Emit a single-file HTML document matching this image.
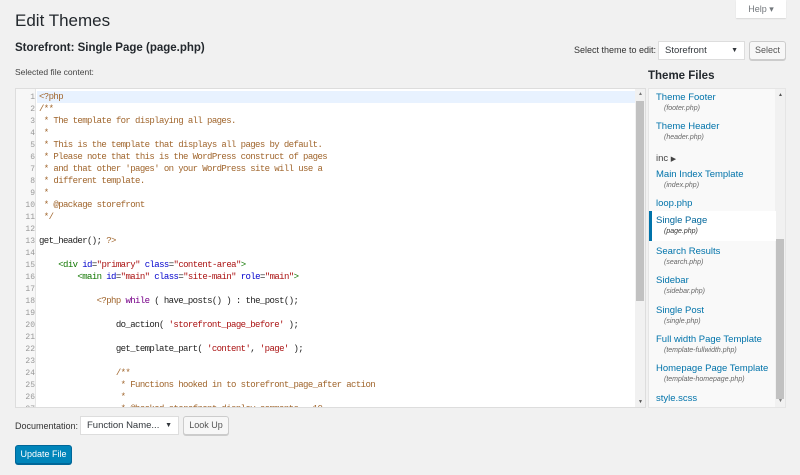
<!DOCTYPE html>
<html><head><style>
*{box-sizing:border-box;margin:0;padding:0}
body{width:800px;height:475px;background:#f1f1f1;font-family:"Liberation Sans",sans-serif;color:#23282d;position:relative;overflow:hidden}
.a{position:absolute;white-space:nowrap}
.code{position:absolute;left:15px;top:88px;width:631px;height:320px;background:#fff;border:1px solid #ddd;overflow:hidden}
.gut{position:absolute;left:0;top:0;width:20px;height:100%;background:#f7f7f7;border-right:1px solid #e5e5e5}
.ln{position:absolute;left:0;width:19px;text-align:right;font:8px "Liberation Mono",monospace;color:#999}
.cl{position:absolute;left:23px;font:9px "Liberation Mono",monospace;letter-spacing:-0.6px;color:#222;white-space:pre}
.cm{color:#a0652c}.kw{color:#708}.st{color:#a11}.tg{color:#170}.at{color:#00c}
.btn{position:absolute;background:#f7f7f7;border:1px solid #ccc;border-radius:3px;font-size:9px;color:#555;text-align:center;box-shadow:0 1px 0 #ccc}
.sel{position:absolute;background:#fff;border:1px solid #ddd;font-size:9.5px;color:#32373c;padding-left:6px}
.fl{position:absolute;left:648px;top:88px;width:138px;height:320px;background:#f9f9f9;border:1px solid #e5e5e5;overflow:hidden}
.fi{position:absolute;left:7px;font-size:9.5px;color:#0073aa;white-space:nowrap}
.fs{position:absolute;left:15px;font-size:7px;font-style:italic;color:#666;white-space:nowrap}
</style></head><body>
<div class="a" style="left:736px;top:0;width:50px;height:18px;background:#fff;box-shadow:0 1px 1px rgba(0,0,0,.1);font-size:9px;color:#72777c;text-align:center;line-height:18px">Help ▾</div>
<div class="a" style="left:15px;top:11px;font-size:17px;color:#23282d">Edit Themes</div>
<div class="a" style="left:15px;top:42px;font-size:11.5px;font-weight:bold">Storefront: Single Page (page.php)</div>
<div class="a" style="left:15px;top:67px;font-size:8.5px;color:#444">Selected file content:</div>
<div class="a" style="left:574px;top:45px;font-size:9px;color:#333">Select theme to edit:</div>
<div class="sel" style="left:658px;top:41px;width:87px;height:19px;line-height:17px">Storefront<span style="position:absolute;right:6px;font-size:7px">▼</span></div>
<div class="btn" style="left:749px;top:41px;width:37px;height:19px;line-height:17px">Select</div>
<div class="a" style="left:648px;top:70px;font-size:11.5px;font-weight:bold;color:#23282d">Theme Files</div>

<div class="code">
<div class="gut"></div>
<div style="position:absolute;left:21px;top:2px;width:600px;height:12px;background:#e8f2ff"></div>
<div style="position:absolute;right:0;top:0;width:10px;height:100%;background:#f1f1f1"></div>
<div style="position:absolute;right:1px;top:12px;width:8px;height:200px;background:#c1c1c1"></div>
<div style="position:absolute;right:2px;top:2px;font-size:5px;color:#777">▲</div>
<div style="position:absolute;right:2px;bottom:2px;font-size:5px;color:#555">▼</div>
<div id="lines"></div>
</div>

<div class="fl">
<div style="position:absolute;right:0;top:0;width:10px;height:100%;background:#f1f1f1"></div>
<div style="position:absolute;right:1px;top:150px;width:8px;height:160px;background:#c1c1c1"></div>
<div style="position:absolute;right:2px;top:3px;font-size:5px;color:#555">▲</div>
<div style="position:absolute;right:2px;bottom:3px;font-size:5px;color:#777">▼</div>
<div style="position:absolute;left:0;top:122px;width:127px;height:30px;background:#fff;border-left:3px solid #0073aa"></div>
<div class="fi" style="top:3px">Theme Footer</div><div class="fs" style="top:16px">(footer.php)</div>
<div class="fi" style="top:32px">Theme Header</div><div class="fs" style="top:45px">(header.php)</div>
<div class="fi" style="top:64px;color:#444">inc <span style="font-size:7px">▶</span></div>
<div class="fi" style="top:80px">Main Index Template</div><div class="fs" style="top:93px">(index.php)</div>
<div class="fi" style="top:109px">loop.php</div>
<div class="fi" style="top:126px;font-weight:bold;color:#00669b;font-weight:normal">Single Page</div><div class="fs" style="top:139px;color:#333">(page.php)</div>
<div class="fi" style="top:157px">Search Results</div><div class="fs" style="top:170px">(search.php)</div>
<div class="fi" style="top:186px">Sidebar</div><div class="fs" style="top:199px">(sidebar.php)</div>
<div class="fi" style="top:216px">Single Post</div><div class="fs" style="top:229px">(single.php)</div>
<div class="fi" style="top:245px">Full width Page Template</div><div class="fs" style="top:258px">(template-fullwidth.php)</div>
<div class="fi" style="top:274px">Homepage Page Template</div><div class="fs" style="top:287px">(template-homepage.php)</div>
<div class="fi" style="top:304px">style.scss</div>
</div>

<div class="a" style="left:15px;top:421px;font-size:9px;color:#333">Documentation:</div>
<div class="sel" style="left:80px;top:416px;width:99px;height:19px;line-height:17px">Function Name...<span style="position:absolute;right:6px;font-size:7px">▼</span></div>
<div class="btn" style="left:183px;top:416px;width:46px;height:19px;line-height:17px">Look Up</div>
<div class="a" style="left:15px;top:445px;width:57px;height:19px;background:#0085ba;border:1px solid #006799;border-radius:3px;color:#fff;font-size:9px;text-align:center;line-height:17px;box-shadow:0 1px 0 #006799">Update File</div>

<script>
var L=[
'<span class="cm">&lt;?php</span>',
'<span class="cm">/**</span>',
'<span class="cm"> * The template for displaying all pages.</span>',
'<span class="cm"> *</span>',
'<span class="cm"> * This is the template that displays all pages by default.</span>',
'<span class="cm"> * Please note that this is the WordPress construct of pages</span>',
'<span class="cm"> * and that other \'pages\' on your WordPress site will use a</span>',
'<span class="cm"> * different template.</span>',
'<span class="cm"> *</span>',
'<span class="cm"> * @package storefront</span>',
'<span class="cm"> */</span>',
'',
'get_header(); <span class="cm">?&gt;</span>',
'',
'    <span class="tg">&lt;div</span> <span class="at">id</span>=<span class="st">"primary"</span> <span class="at">class</span>=<span class="st">"content-area"</span><span class="tg">&gt;</span>',
'        <span class="tg">&lt;main</span> <span class="at">id</span>=<span class="st">"main"</span> <span class="at">class</span>=<span class="st">"site-main"</span> <span class="at">role</span>=<span class="st">"main"</span><span class="tg">&gt;</span>',
'',
'            <span class="cm">&lt;?php</span> <span class="kw">while</span> ( have_posts() ) : the_post();',
'',
'                do_action( <span class="st">\'storefront_page_before\'</span> );',
'',
'                get_template_part( <span class="st">\'content\'</span>, <span class="st">\'page\'</span> );',
'',
'                <span class="cm">/**</span>',
'<span class="cm">                 * Functions hooked in to storefront_page_after action</span>',
'<span class="cm">                 *</span>',
'<span class="cm">                 * @hooked storefront_display_comments - 10</span>'
];
var h='';
for(var i=0;i<L.length;i++){var t=3+i*12;
h+='<div class="ln" style="top:'+(t+1)+'px">'+(i+1)+'</div><div class="cl" style="top:'+t+'px">'+L[i]+'</div>';}
document.getElementById('lines').innerHTML=h;
</script>
</body></html>
